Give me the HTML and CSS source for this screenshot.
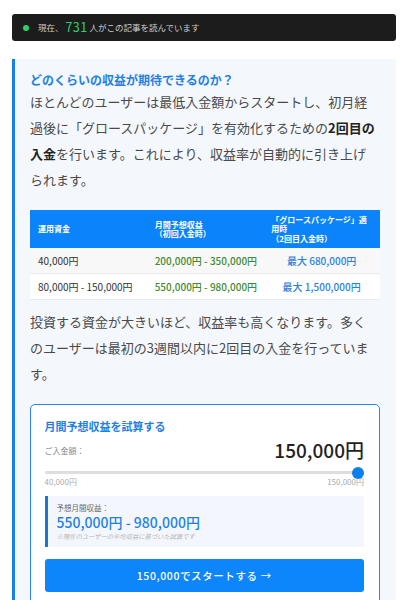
FILE: index.html
```html
<!DOCTYPE html>
<html lang="ja">
<head>
<meta charset="utf-8">
<link rel="stylesheet" href="styles.css">
</head>
<body>
<div class="page">
  <div class="live-bar">
    <span class="live-dot"></span>
    <span class="live-text">現在、<span class="live-count">731</span>人がこの記事を読んでいます</span>
  </div>

  <section class="earn">
    <h2 class="earn-title">どのくらいの収益が期待できるのか？</h2>
    <p class="earn-text">ほとんどのユーザーは最低入金額からスタートし、初月経過後に「グロースパッケージ」を有効化するための<strong>2回目の</strong><br><strong>入金</strong>を行います。これにより、収益率が自動的に引き上げ<br>られます。</p>

    <table class="earn-table">
      <thead>
        <tr>
          <th>運用資金</th>
          <th>月間予想収益<br>（初回入金時）</th>
          <th>「グロースパッケージ」適用時<br>（2回目入金時）</th>
        </tr>
      </thead>
      <tbody>
        <tr class="row-alt">
          <td>40,000円</td>
          <td class="green">200,000円 - 350,000円</td>
          <td class="blue">最大 680,000円</td>
        </tr>
        <tr>
          <td>80,000円 - 150,000円</td>
          <td class="green">550,000円 - 980,000円</td>
          <td class="blue">最大 1,500,000円</td>
        </tr>
      </tbody>
    </table>

    <p class="earn-text earn-text-2">投資する資金が大きいほど、収益率も高くなります。多く<br>のユーザーは最初の3週間以内に2回目の入金を行っていま<br>す。</p>

    <div class="calc">
      <h3 class="calc-title">月間予想収益を試算する</h3>
      <div class="calc-amount">
        <span class="calc-label">ご入金額：</span>
        <span class="calc-value">150,000円</span>
      </div>
      <div class="slider">
        <div class="slider-track"></div>
        <div class="slider-thumb"></div>
      </div>
      <div class="slider-labels">
        <span>40,000円</span>
        <span>150,000円</span>
      </div>
      <div class="result">
        <div class="result-label">予想月間収益：</div>
        <div class="result-value">550,000円 - 980,000円</div>
        <div class="result-note">※現在のユーザーの平均収益に基づいた試算です</div>
      </div>
      <button class="cta">150,000でスタートする →</button>
    </div>
  </section>
</div>
</body>
</html>
```

FILE: styles.css
```css
* { box-sizing: border-box; }

body {
  margin: 0;
  background: #ffffff;
  font-family: "Noto Sans CJK JP", "Noto Sans", sans-serif;
  color: #444;
}

.page {
  padding: 14px 4px 0 12px;
}

.live-bar {
  height: 27px;
  background: #1c1c1c;
  border-radius: 3px;
  display: flex;
  align-items: center;
  padding-left: 11px;
  gap: 9px;
}

.live-dot {
  width: 6px;
  height: 6px;
  border-radius: 50%;
  background: #2fd06a;
  flex: none;
}

.live-text {
  font-size: 8.5px;
  color: #cfcfcf;
  line-height: 1;
  display: flex;
  align-items: center;
}

.live-count {
  font-size: 12.5px;
  color: #33d070;
  margin: 0 2px 0 2px;
  letter-spacing: 0.4px;
}

.earn {
  margin-top: 18px;
  background: #f4f8fd;
  border-left: 3px solid #1a7fe6;
  padding: 12px 16px 20px 15px;
}

.earn-title {
  margin: 0;
  font-size: 12px;
  line-height: 18px;
  font-weight: 700;
  color: #1f80e2;
}

.earn-text {
  margin: 0;
  font-size: 13px;
  line-height: 26px;
  color: #4a4a4a;
}

.earn-text strong {
  color: #222;
  font-weight: 700;
}

.earn-table {
  width: 100%;
  margin-top: 17px;
  border-collapse: collapse;
  table-layout: fixed;
}

.earn-table th {
  background: #0b84fb;
  color: #fff;
  font-size: 8px;
  line-height: 9.5px;
  font-weight: 700;
  text-align: left;
  vertical-align: middle;
  padding: 4px 8px;
  height: 38px;
}

.earn-table td {
  font-size: 10px;
  line-height: 15px;
  padding: 5px 8px;
  color: #333;
  background: #ffffff;
  border-bottom: 1px solid #e8eaed;
  white-space: nowrap;
}

.earn-table .row-alt td {
  background: #f8f8f8;
}

.earn-table td.green {
  color: #3f8a34;
  font-weight: 500;
}

.earn-table td.blue {
  color: #2a80e0;
  font-weight: 500;
  text-align: center;
}

.earn-text-2 {
  margin-top: 9px;
}

.calc {
  margin-top: 17px;
  background: #fff;
  border: 1.5px solid #2a86ea;
  border-radius: 5px;
  padding: 11.5px 15px 20px 13.5px;
}

.calc-title {
  margin: 0;
  font-size: 11px;
  line-height: 18px;
  font-weight: 700;
  color: #1f80e2;
}

.calc-amount {
  margin-top: 2px;
  height: 25px;
  display: flex;
  justify-content: space-between;
  align-items: center;
}

.calc-label {
  font-size: 8px;
  color: #888;
  padding-top: 3px;
}

.calc-value {
  font-size: 19px;
  font-weight: 500;
  color: #222;
  line-height: 25px;
}

.slider {
  position: relative;
  height: 12px;
  margin-top: 5px;
  display: flex;
  align-items: center;
}

.slider-track {
  width: 100%;
  height: 3px;
  border-radius: 2px;
  background: #dedede;
  margin-right: 4px;
}

.slider-thumb {
  position: absolute;
  right: 0;
  top: 0;
  width: 12px;
  height: 12px;
  border-radius: 50%;
  background: #0b7ff0;
}

.slider-labels {
  margin-top: -2px;
  display: flex;
  justify-content: space-between;
  font-size: 8px;
  line-height: 10px;
  color: #aaa;
}

.result {
  margin-top: 9px;
  background: #f3f7fd;
  border-left: 3px solid #1f72d8;
  padding: 7px 10px 5px 9px;
}

.result-label {
  font-size: 7.5px;
  line-height: 10px;
  color: #666;
}

.result-value {
  margin-top: 1px;
  font-size: 14px;
  line-height: 16px;
  font-weight: 500;
  color: #1f80e2;
}

.result-note {
  margin-top: 2px;
  font-size: 6.3px;
  line-height: 10px;
  font-style: italic;
  color: #b5b5b5;
}

.cta {
  display: block;
  width: 100%;
  height: 33px;
  margin-top: 12px;
  border: none;
  border-radius: 3px;
  background: #0d85fb;
  color: #fff;
  font-family: "Noto Sans CJK JP", "Noto Sans", sans-serif;
  font-size: 10.5px;
  font-weight: 500;
  letter-spacing: 0.6px;
}
```
